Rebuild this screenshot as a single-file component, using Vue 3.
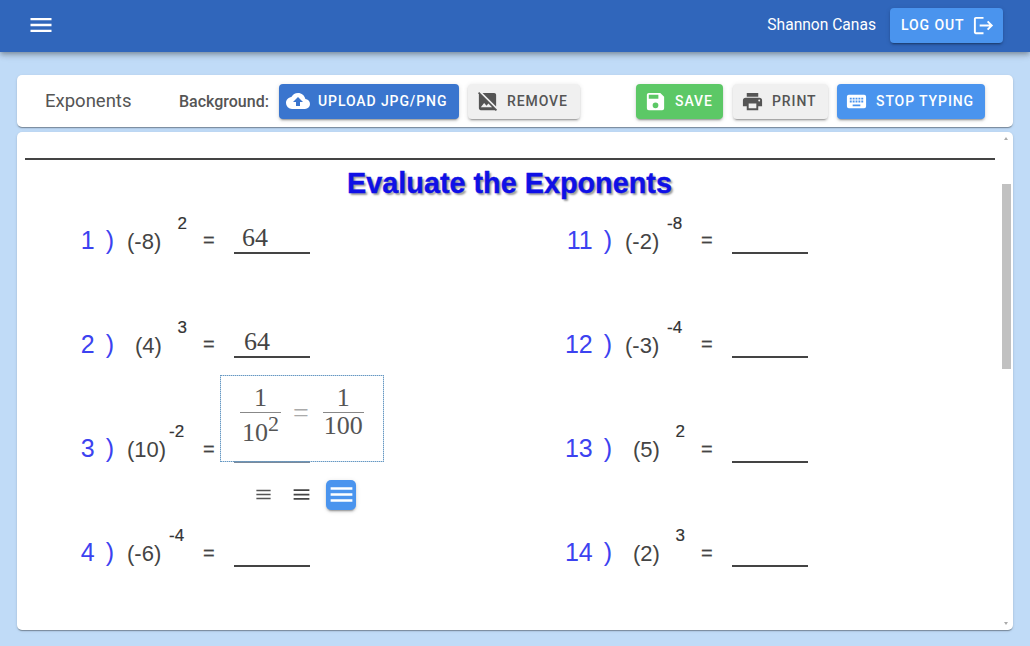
<template>
  <div class="page">
    <header class="app-bar">
      <button class="menu-btn">
        <svg viewBox="0 0 24 24" class="icon menu-icon"><path :d="icons.menu" /></svg>
      </button>
      <span class="user">Shannon Canas</span>
      <button class="btn blue logout">
        Log out
        <svg viewBox="0 0 24 24" class="icon"><path :d="icons.logout" /></svg>
      </button>
    </header>

    <main class="content">
      <section class="card toolbar">
        <span class="doc-title">Exponents</span>
        <span class="bg-label">Background:</span>
        <button class="btn dark-blue upload">
          <svg viewBox="0 0 24 24" class="icon"><path :d="icons.upload" /></svg>
          Upload JPG/PNG
        </button>
        <button class="btn grey remove">
          <svg viewBox="0 0 24 24" class="icon"><path :d="icons.imageOff" /></svg>
          Remove
        </button>
        <button class="btn green save">
          <svg viewBox="0 0 24 24" class="icon"><path :d="icons.save" /></svg>
          Save
        </button>
        <button class="btn grey print">
          <svg viewBox="0 0 24 24" class="icon"><path :d="icons.printer" /></svg>
          Print
        </button>
        <button class="btn blue stop">
          <svg viewBox="0 0 24 24" class="icon"><path :d="icons.keyboard" /></svg>
          Stop typing
        </button>
      </section>

      <section class="card sheet">
        <hr class="rule" />
        <h1 class="sheet-title">Evaluate the Exponents</h1>

        <div class="problems">
          <div v-for="p in problems" :key="p.n" class="problem">
            <span class="num">{{ p.n }} )</span>
            <span class="base" :class="{ short: p.short }">{{ p.base }}</span>
            <span class="exp" :class="{ neg: p.exp.startsWith('-') }">{{ p.exp }}</span>
            <span class="eq">=</span>
            <span class="blank" :class="{ active: p.editing }">
              <span v-if="p.answer" class="answer" :class="{ nudge: p.n === 2 }">{{ p.answer }}</span>
              <template v-if="p.editing">
                <div class="editor">
                  <span class="frac">
                    <span class="top">1</span>
                    <span class="bottom">10<sup>2</sup></span>
                  </span>
                  <span class="math-eq">=</span>
                  <span class="frac second">
                    <span class="top">1</span>
                    <span class="bottom">100</span>
                  </span>
                </div>
                <div class="align-tools">
                  <svg viewBox="0 0 24 24" class="icon a-left"><path :d="icons.menu" /></svg>
                  <svg viewBox="0 0 24 24" class="icon a-center"><path :d="icons.menu" /></svg>
                  <button class="a-right">
                    <svg viewBox="0 0 24 24" class="icon"><path :d="icons.menu" /></svg>
                  </button>
                </div>
              </template>
            </span>
          </div>
        </div>

        <div class="scrollbar">
          <i class="arrow up"></i>
          <i class="thumb"></i>
          <i class="arrow down"></i>
        </div>
      </section>
    </main>
  </div>
</template>

<script setup>
const icons = {
  menu: 'M3,6H21V8H3V6M3,11H21V13H3V11M3,16H21V18H3V16Z',
  logout: 'M17 7L15.59 8.41L18.17 11H8V13H18.17L15.59 15.58L17 17L22 12M4 5H12V3H4C2.9 3 2 3.9 2 5V19C2 20.1 2.9 21 4 21H12V19H4V5Z',
  upload: 'M14,13V17H10V13H7L12,8L17,13M19.35,10.03C18.67,6.59 15.64,4 12,4C9.11,4 6.6,5.64 5.35,8.03C2.34,8.36 0,10.9 0,14A6,6 0 0,0 6,20H19A5,5 0 0,0 24,15C24,12.36 21.95,10.22 19.35,10.03Z',
  imageOff: 'M21 17.2L6.8 3H19C20.1 3 21 3.9 21 5V17.2M20.7 22L19.7 21H5C3.9 21 3 20.1 3 19V4.3L2 3.3L3.3 2L22 20.7L20.7 22M16.8 18L12.9 14.1L11 16.5L8.5 13.5L5 18H16.8Z',
  save: 'M15,9H5V5H15M12,19A3,3 0 0,1 9,16A3,3 0 0,1 12,13A3,3 0 0,1 15,16A3,3 0 0,1 12,19M17,3H5C3.89,3 3,3.9 3,5V19A2,2 0 0,0 5,21H19A2,2 0 0,0 21,19V7L17,3Z',
  printer: 'M18,3H6V7H18M19,12A1,1 0 0,1 18,11A1,1 0 0,1 19,10A1,1 0 0,1 20,11A1,1 0 0,1 19,12M16,19H8V14H16M19,8H5A3,3 0 0,0 2,11V17H6V21H18V17H22V11A3,3 0 0,0 19,8Z',
  keyboard: 'M19,10H17V8H19M19,13H17V11H19M16,10H14V8H16M16,13H14V11H16M16,17H8V15H16M7,10H5V8H7M7,13H5V11H7M8,11H10V13H8M8,8H10V10H8M11,11H13V13H11M11,8H13V10H11M20,5H4C2.89,5 2,5.89 2,7V17A2,2 0 0,0 4,19H20A2,2 0 0,0 22,17V7C22,5.89 21.1,5 20,5Z'
}

// left column first, then right, the grid fills by column
const problems = [
  { n: 1, base: '(-8)', exp: '2', answer: '64' },
  { n: 2, base: '(4)', exp: '3', answer: '64', short: true },
  { n: 3, base: '(10)', exp: '-2', editing: true },
  { n: 4, base: '(-6)', exp: '-4' },
  { n: 11, base: '(-2)', exp: '-8' },
  { n: 12, base: '(-3)', exp: '-4' },
  { n: 13, base: '(5)', exp: '2', short: true },
  { n: 14, base: '(2)', exp: '3', short: true }
]
</script>

<style>
html,
body {
  margin: 0;
  overflow: hidden;
}
</style>

<style scoped>
.page {
  width: 1030px;
  height: 646px;
  display: flex;
  flex-direction: column;
  background: #c0dbf7;
  font-family: Roboto, "Liberation Sans", sans-serif;
  overflow: hidden;
}

.app-bar {
  height: 52px;
  flex: none;
  display: flex;
  align-items: center;
  padding: 0 27px 2px 27px;
  box-sizing: border-box;
  background: #3066bb;
  box-shadow: 0 2px 4px -1px rgba(0, 0, 0, 0.2), 0 4px 5px rgba(0, 0, 0, 0.14), 0 1px 10px rgba(0, 0, 0, 0.12);
  position: relative;
  z-index: 1;
}

.menu-btn {
  background: none;
  border: none;
  padding: 0;
  display: flex;
  margin-right: auto;
  color: #fff;
}

.icon {
  width: 24px;
  height: 24px;
  fill: currentColor;
  flex: none;
}

.menu-btn .menu-icon {
  width: 28px;
  height: 28px;
}

.user {
  color: #fff;
  font-size: 15.6px;
  margin-right: 14px;
}

.btn {
  height: 35px;
  display: flex;
  align-items: center;
  gap: 8px;
  box-sizing: border-box;
  border: none;
  border-radius: 4px;
  font-family: inherit;
  font-size: 14px;
  font-weight: 500;
  letter-spacing: 0.9px;
  text-transform: uppercase;
  white-space: nowrap;
  box-shadow: 0 3px 1px -2px rgba(0, 0, 0, 0.2), 0 2px 2px rgba(0, 0, 0, 0.14), 0 1px 5px rgba(0, 0, 0, 0.12);
}

.blue {
  background: #4a94ee;
  color: #fff;
}

.dark-blue {
  background: #3a75ce;
  color: #fff;
}

.green {
  background: #5cc866;
  color: #fff;
}

.grey {
  background: #f0f0f0;
  color: #555;
}

.logout {
  width: 113px;
  padding: 0 8px 0 11px;
  gap: 8px;
}

.logout .icon {
  width: 23px;
  height: 23px;
}

.content {
  flex: 1;
  display: flex;
  flex-direction: column;
  gap: 5px;
  padding: 23px 17px 16px;
  min-height: 0;
}

.card {
  background: #fff;
  border-radius: 5px;
  box-shadow: 0 2px 1px -1px rgba(0, 0, 0, 0.2), 0 1px 1px rgba(0, 0, 0, 0.14), 0 1px 3px rgba(0, 0, 0, 0.12);
}

.toolbar {
  height: 52px;
  flex: none;
  display: flex;
  align-items: center;
  padding: 0 0 0 28px;
}

.doc-title {
  font-size: 18.5px;
  color: #555;
  width: 134px;
}

.bg-label {
  font-size: 16px;
  font-weight: 500;
  color: #555;
  width: 100px;
}

.upload {
  width: 180px;
  padding: 0 0 0 7px;
  margin-right: 9px;
}

.remove {
  width: 112px;
  padding: 0 0 0 8px;
  margin-right: 56px;
}

.remove .icon,
.save .icon,
.print .icon,
.stop .icon {
  width: 23px;
  height: 23px;
}

.save {
  width: 87px;
  padding: 0 0 0 8px;
  margin-right: 10px;
}

.print {
  width: 95px;
  padding: 0 0 0 8px;
  margin-right: 9px;
}

.stop {
  width: 148px;
  padding: 0 0 0 8px;
}

.sheet {
  flex: 1;
  position: relative;
  min-height: 0;
  font-family: "Liberation Sans", Arial, sans-serif;
  color: #444;
}

.rule {
  margin: 0;
  position: relative;
  top: 26px;
  width: 970px;
  left: 8px;
  height: 2px;
  border: none;
  background: #444;
}

.sheet-title {
  margin: 0;
  position: relative;
  top: 33px;
  height: 32px;
  line-height: 32px;
  text-align: center;
  width: 985px;
  font-size: 28.8px;
  font-weight: 700;
  color: #0f10e6;
  -webkit-text-stroke: 0.4px #0f10e6;
  text-shadow: 2px 2px 2px rgba(0, 0, 0, 0.4);
}

.problems {
  margin: 54px 0 0 43px;
  display: grid;
  grid-template-columns: 498px 498px;
  grid-template-rows: repeat(4, 40px);
  grid-auto-flow: column;
  row-gap: 64.3px;
}

.problem {
  display: flex;
  align-items: center;
  height: 40px;
}

.num {
  width: 54px;
  margin-right: 13px;
  text-align: right;
  font-size: 25px;
  word-spacing: 4px;
  color: #3c42f0;
  white-space: nowrap;
}

.base {
  width: 42px;
  font-size: 22px;
  margin-top: 3px;
  box-sizing: border-box;
  white-space: nowrap;
}

.base.short {
  padding-left: 8px;
}

.exp {
  width: 18px;
  font-size: 17px;
  text-align: right;
  margin-top: -33px;
  color: #333;
  -webkit-text-stroke: 0.2px #333;
  margin-right: 16px;
}

.exp.neg {
  width: 15px;
  margin-right: 19px;
}

.eq {
  width: 31px;
  font-size: 20px;
  margin-top: 1px;
  -webkit-text-stroke: 0.2px #444;
}

.blank {
  position: relative;
  align-self: flex-start;
  width: 76px;
  height: 34px;
  box-sizing: border-box;
  border-bottom: 2px solid #444;
}

.blank.active {
  border-bottom-color: #7a8a9c;
}

.answer {
  position: absolute;
  left: 8px;
  top: 1px;
  font-family: "Liberation Serif", serif;
  font-size: 26px;
  line-height: 34px;
  color: #444;
}

.answer.nudge {
  left: 10px;
}

.editor {
  position: absolute;
  left: -14px;
  bottom: -1px;
  width: 164px;
  height: 87px;
  box-sizing: border-box;
  border: 1px dotted #5f93c0;
  outline: 1px solid rgba(111, 159, 200, 0.45);
  outline-offset: -1px;
  display: flex;
  align-items: flex-start;
  gap: 12px;
  padding: 9px 0 0 19px;
  font-family: "Liberation Serif", serif;
  font-size: 26px;
  color: #555;
}

.frac {
  display: flex;
  flex-direction: column;
  align-items: center;
  line-height: 26px;
  min-width: 41px;
}

.frac.second {
  margin-left: 2px;
}

.top {
  align-self: stretch;
  text-align: center;
  border-bottom: 1px solid #888;
  height: 27px;
}

.bottom {
  margin-top: 7px;
}

.frac.second .bottom {
  margin-top: 0;
}

.bottom sup {
  font-size: 22px;
  line-height: 0;
  vertical-align: 10px;
}

.math-eq {
  color: #aaa;
  font-size: 28px;
  line-height: 28px;
  margin-top: 14px;
}

.align-tools {
  position: absolute;
  left: 20px;
  top: 51px;
  display: flex;
  align-items: center;
}

.a-left {
  width: 19px;
  height: 19px;
  color: #555;
  margin-right: 18px;
}

.a-center {
  width: 21px;
  height: 21px;
  color: #444;
  margin-right: 14px;
}

.a-right {
  width: 30px;
  height: 30px;
  padding: 0;
  border: none;
  border-radius: 5px;
  background: #4a94ee;
  color: #fff;
  display: flex;
  align-items: center;
  justify-content: center;
  box-shadow: 0 3px 1px -2px rgba(0, 0, 0, 0.2), 0 2px 2px rgba(0, 0, 0, 0.14), 0 1px 5px rgba(0, 0, 0, 0.12);
}

.a-right .icon {
  width: 29px;
  height: 29px;
}

.scrollbar {
  position: absolute;
  top: 0;
  bottom: 0;
  right: 2px;
  width: 9px;
}

.thumb {
  position: absolute;
  top: 52px;
  height: 185px;
  width: 9px;
  background: #c1c1c1;
}

.arrow {
  position: absolute;
  left: 2px;
  width: 0;
  height: 0;
  border-left: 2.5px solid transparent;
  border-right: 2.5px solid transparent;
}

.arrow.up {
  top: 5px;
  border-bottom: 3px solid #aaa;
}

.arrow.down {
  bottom: 5px;
  border-top: 3px solid #aaa;
}
</style>
